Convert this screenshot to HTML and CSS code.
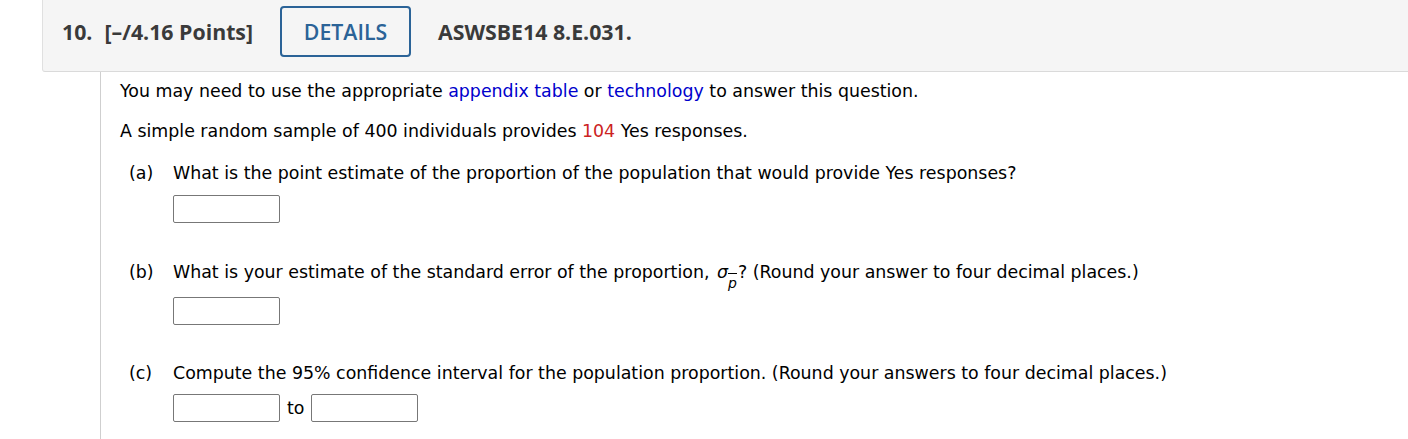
FILE: index.html
```html
<!DOCTYPE html>
<html>
<head>
<meta charset="utf-8">
<link rel="stylesheet" href="styles.css">
</head>
<body>
<div class="header">
  <span class="qnum">10.</span>
  <span class="points">[–/4.16 Points]</span>
  <span class="details">DETAILS</span>
  <span class="code">ASWSBE14 8.E.031.</span>
</div>
<div class="content">
  <p class="intro">You may need to use the appropriate <a class="link">appendix table</a> or <a class="link">technology</a> to answer this question.</p>
  <p class="stem">A simple random sample of 400 individuals provides <span class="red">104</span> Yes responses.</p>
  <div class="part part-a">
    <span class="label">(a)</span>
    <div class="body">
      <div class="q">What is the point estimate of the proportion of the population that would provide Yes responses?</div>
      <div class="answers"><span class="box"></span></div>
    </div>
  </div>
  <div class="part part-b">
    <span class="label">(b)</span>
    <div class="body">
      <div class="q">What is your estimate of the standard error of the proportion, <span class="sym"><i>σ</i><span class="sub"><i class="pbar">p</i></span></span>? (Round your answer to four decimal places.)</div>
      <div class="answers answers-b"><span class="box"></span></div>
    </div>
  </div>
  <div class="part part-c">
    <span class="label">(c)</span>
    <div class="body">
      <div class="q">Compute the 95% confidence interval for the population proportion. (Round your answers to four decimal places.)</div>
      <div class="answers answers-c"><span class="box"></span><span class="to">to</span><span class="box"></span></div>
    </div>
  </div>
</div>
</body>
</html>
```
FILE: styles.css
```css
html, body {
  margin: 0;
  padding: 0;
  background: #fff;
}
body {
  font-family: "DejaVu Sans", Verdana, sans-serif;
  font-size: 17.4px;
  color: #000;
  height: 439px;
  overflow: hidden;
}
.header {
  margin-left: 42px;
  background: #f5f5f5;
  border-left: 1px solid #e0e0e0;
  border-bottom: 1px solid #dadada;
  border-bottom-left-radius: 3px;
  display: flex;
  align-items: center;
  padding-left: 19px;
  padding-bottom: 8px;
  box-sizing: border-box;
  height: 72px;
  font-family: "Open Sans", sans-serif;
  font-weight: 700;
  font-size: 21.3px;
  color: #3a3a3a;
}
.qnum { margin-right: 12px; }
.points { margin-right: 27px; }
.details {
  width: 131px;
  height: 51px;
  box-sizing: border-box;
  border: 2px solid #2b6397;
  border-radius: 4px;
  color: #2b6397;
  display: flex;
  align-items: center;
  justify-content: center;
  font-weight: 600;
  margin-right: 27px;
}
.content {
  margin-left: 100px;
  border-left: 1px solid #cfcfcf;
  padding-left: 19px;
  padding-top: 9px;
  height: 367px;
  box-sizing: border-box;
  overflow: hidden;
}
p { margin: 0; }
.intro { line-height: 21px; margin-bottom: 19px; }
.stem { line-height: 21px; margin-bottom: 21px; }
.link { color: #0000cc; text-decoration: none; }
.red { color: #cc2222; }
.part {
  display: flex;
  padding-left: 9px;
}
.part-a { margin-bottom: 39px; }
.part-b { margin-bottom: 38px; }
.label { width: 44px; flex: none; line-height: 21px; }
.q { line-height: 21px; }
.answers {
  display: flex;
  align-items: center;
  margin-top: 11px;
}
.answers-b { margin-top: 7px; }
.answers-c { margin-top: 10px; }
.box {
  display: inline-block;
  width: 107px;
  height: 28px;
  box-sizing: border-box;
  border: 1px solid #777;
  border-radius: 2px;
  background: #fff;
}
.to { margin: 0 7px; }
.sym { white-space: nowrap; margin-left: 2px; }
.sub {
  display: inline-block;
  font-size: 14px;
  line-height: 14px;
  vertical-align: -10px;
  margin-right: 1px;
}
.pbar {
  display: inline-block;
  border-top: 1px solid #000;
  padding-top: 4px;
  line-height: 11px;
}
```
